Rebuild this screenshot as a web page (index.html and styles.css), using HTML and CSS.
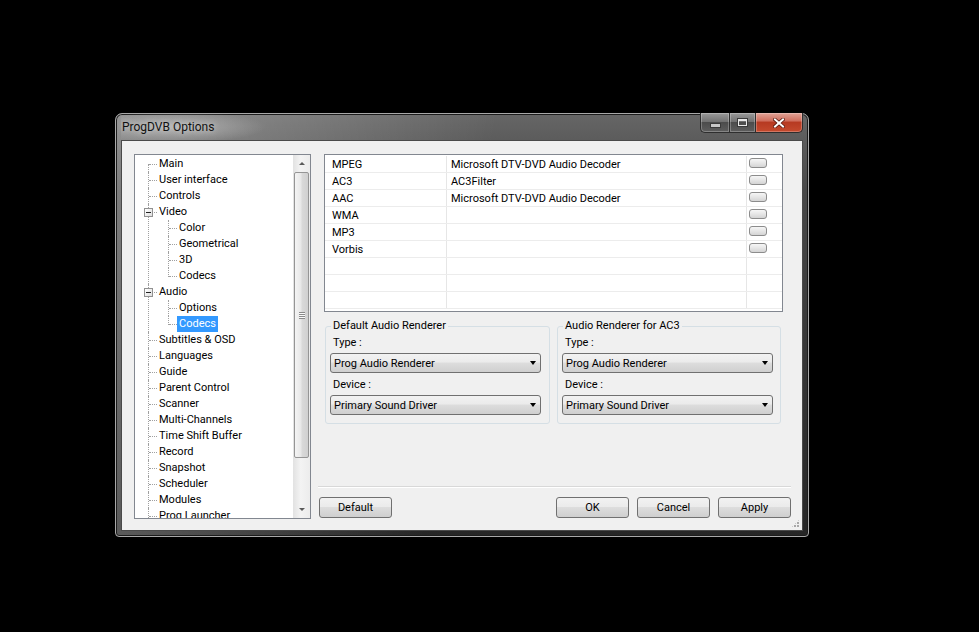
FILE: index.html
```html
<!DOCTYPE html>
<html lang="en">
<head>
    <meta charset="UTF-8">
    <title>ProgDVB Options</title>
    <link rel="stylesheet" href="styles.css">
</head>
<body>
    <div class="window">
        <!-- Title bar -->
        <div class="titlebar">
            <span class="title">ProgDVB Options</span>
            <div class="caption">
                <span class="cap cap-min"><i></i></span>
                <span class="cap cap-max"><i></i></span>
                <span class="cap cap-close">
                    <svg width="12" height="10" viewBox="0 0 12 10">
                        <path d="M2 1.5 L10 8.5 M10 1.5 L2 8.5" stroke="#5a1a10" stroke-width="3.6" stroke-linecap="square"/>
                        <path d="M2 1.5 L10 8.5 M10 1.5 L2 8.5" stroke="#ffffff" stroke-width="2" stroke-linecap="square"/>
                    </svg>
                </span>
            </div>
        </div>

        <div class="client">
            <!-- Left: options tree -->
            <div class="treebox">
                <div class="tree-wrap">
                    <ul class="tree">
                        <li><span class="lbl">Main</span></li>
                        <li><span class="lbl">User interface</span></li>
                        <li><span class="lbl">Controls</span></li>
                        <li><i class="exp"></i><span class="lbl">Video</span>
                            <ul>
                                <li><span class="lbl">Color</span></li>
                                <li><span class="lbl">Geometrical</span></li>
                                <li><span class="lbl">3D</span></li>
                                <li><span class="lbl">Codecs</span></li>
                            </ul>
                        </li>
                        <li><i class="exp"></i><span class="lbl">Audio</span>
                            <ul>
                                <li><span class="lbl">Options</span></li>
                                <li><span class="lbl sel">Codecs</span></li>
                            </ul>
                        </li>
                        <li><span class="lbl">Subtitles &amp; OSD</span></li>
                        <li><span class="lbl">Languages</span></li>
                        <li><span class="lbl">Guide</span></li>
                        <li><span class="lbl">Parent Control</span></li>
                        <li><span class="lbl">Scanner</span></li>
                        <li><span class="lbl">Multi-Channels</span></li>
                        <li><span class="lbl">Time Shift Buffer</span></li>
                        <li><span class="lbl">Record</span></li>
                        <li><span class="lbl">Snapshot</span></li>
                        <li><span class="lbl">Scheduler</span></li>
                        <li><span class="lbl">Modules</span></li>
                        <li><span class="lbl">Prog Launcher</span></li>
                    </ul>
                </div>
                <div class="vscroll">
                    <span class="arr arr-up"></span>
                    <div class="track"><div class="thumb"><i></i></div></div>
                    <span class="arr arr-down"></span>
                </div>
            </div>

            <!-- Right: audio codecs page -->
            <div class="side">
                <div class="grid">
                    <div class="row"><span class="c1">MPEG</span><span class="c2">Microsoft DTV-DVD Audio Decoder</span><span class="c3"><i class="mini"></i></span></div>
                    <div class="row"><span class="c1">AC3</span><span class="c2">AC3Filter</span><span class="c3"><i class="mini"></i></span></div>
                    <div class="row"><span class="c1">AAC</span><span class="c2">Microsoft DTV-DVD Audio Decoder</span><span class="c3"><i class="mini"></i></span></div>
                    <div class="row"><span class="c1">WMA</span><span class="c2"></span><span class="c3"><i class="mini"></i></span></div>
                    <div class="row"><span class="c1">MP3</span><span class="c2"></span><span class="c3"><i class="mini"></i></span></div>
                    <div class="row"><span class="c1">Vorbis</span><span class="c2"></span><span class="c3"><i class="mini"></i></span></div>
                    <div class="row"><span class="c1"></span><span class="c2"></span><span class="c3"></span></div>
                    <div class="row"><span class="c1"></span><span class="c2"></span><span class="c3"></span></div>
                    <div class="row"><span class="c1"></span><span class="c2"></span><span class="c3"></span></div>
                </div>

                <div class="groups">
                    <fieldset class="group">
                        <legend>Default Audio Renderer</legend>
                        <div class="lab">Type :</div>
                        <div class="combo"><span>Prog Audio Renderer</span><i class="drop"></i></div>
                        <div class="lab lab-2">Device :</div>
                        <div class="combo"><span>Primary Sound Driver</span><i class="drop"></i></div>
                    </fieldset>
                    <fieldset class="group group-ac3">
                        <legend>Audio Renderer for AC3</legend>
                        <div class="lab">Type :</div>
                        <div class="combo"><span>Prog Audio Renderer</span><i class="drop"></i></div>
                        <div class="lab lab-2">Device :</div>
                        <div class="combo"><span>Primary Sound Driver</span><i class="drop"></i></div>
                    </fieldset>
                </div>

                <div class="sep"></div>

                <div class="buttons">
                    <button class="btn">Default</button>
                    <button class="btn btn-ok">OK</button>
                    <button class="btn">Cancel</button>
                    <button class="btn">Apply</button>
                </div>
            </div>

            <span class="grip"></span>
        </div>
    </div>
</body>
</html>
```

FILE: styles.css
```css
body {
    margin: 0;
    height: 632px;
    overflow: hidden;
    background: #000;
    font-family: Roboto, "Liberation Sans", Arial, sans-serif;
    font-size: 11px;
    color: #000;
}

/* Window frame */
.window {
    width: 694px;
    height: 424px;
    box-sizing: border-box;
    margin: 113px 0 0 115px;
    padding: 0 5px 5px;
    border: 1px solid #a8a8a8;
    border-radius: 7px 7px 4px 4px;
    display: flex;
    flex-direction: column;
    background:
        linear-gradient(100deg, rgba(255, 255, 255, 0.3) 0%, rgba(255, 255, 255, 0.12) 30%, rgba(255, 255, 255, 0) 50%),
        linear-gradient(180deg, #666 0%, #484848 18%, #353535 60%, #262626 100%);
    box-shadow: inset 0 0 0 1px #1c1c1c;
}

.titlebar {
    height: 26px;
    flex: none;
    display: flex;
    align-items: flex-start;
    background: radial-gradient(ellipse 90px 16px at 55px 13px, rgba(205, 205, 205, 0.6), rgba(205, 205, 205, 0));
}

.title {
    margin: 5px 0 0 1px;
    font-size: 12px;
    line-height: 16px;
    color: #111;
    text-shadow: 0 0 6px rgba(235, 235, 235, 0.8);
}

/* Caption buttons */
.caption {
    margin: -1px 0 0 auto;
    display: flex;
    height: 20px;
}

.cap {
    height: 20px;
    box-sizing: border-box;
    border: 1px solid #2e2e2e;
    border-top: none;
    display: flex;
    align-items: center;
    justify-content: center;
    box-shadow: inset 0 0 0 1px rgba(255, 255, 255, 0.25);
}

.cap-min,
.cap-max {
    background: linear-gradient(180deg, #9a9a9a 0%, #727272 45%, #4c4c4c 50%, #5e5e5e 100%);
}

.cap-min {
    width: 29px;
    border-bottom-left-radius: 5px;
    border-right: none;
}

.cap-min i {
    width: 9px;
    height: 3px;
    margin-top: 6px;
    background: #c8c8c8;
    border: 1px solid #3a3a3a;
}

.cap-max {
    width: 26px;
    border-right: none;
}

.cap-max i {
    width: 7px;
    height: 4px;
    border: 1px solid #e8e8e8;
    border-top-width: 2px;
    outline: 1px solid #3a3a3a;
}

.cap-close {
    width: 48px;
    border-bottom-right-radius: 5px;
    background: linear-gradient(180deg, #e2a497 0%, #d0705f 40%, #b73a22 50%, #c44a2e 100%);
}

/* Client area */
.client {
    position: relative;
    flex: 1;
    display: flex;
    gap: 7px;
    padding: 13px 0 0 12px;
    border: 1px solid #4a4a4a;
    background: #f0f0f0;
}

/* Tree view */
.treebox {
    width: 177px;
    height: 365px;
    box-sizing: border-box;
    border: 1px solid #828790;
    background: #fff;
    display: flex;
}

.tree-wrap {
    flex: 1;
    overflow: hidden;
    padding-top: 1px;
}

.tree,
.tree ul {
    list-style: none;
    margin: 0;
    padding: 0;
}

.tree {
    margin-left: 13px;
}

.tree ul {
    margin-left: 11px;
}

.tree li {
    position: relative;
    padding-left: 9px;
    line-height: 16px;
}

.tree li::before {
    content: '';
    position: absolute;
    left: 1px;
    top: 8px;
    width: 8px;
    border-top: 1px dotted #a0a0a0;
}

.tree li::after {
    content: '';
    position: absolute;
    left: 0;
    top: 0;
    bottom: 0;
    border-left: 1px dotted #a0a0a0;
}

.tree > li:first-child::after {
    top: 8px;
}

.tree ul > li:last-child::after {
    bottom: auto;
    height: 9px;
}

.lbl {
    display: inline-block;
    height: 16px;
    padding: 0 2px;
    vertical-align: top;
    white-space: nowrap;
}

.lbl.sel {
    background: #3399ff;
    color: #fff;
}

.exp {
    position: absolute;
    z-index: 1;
    left: -4px;
    top: 4px;
    width: 9px;
    height: 9px;
    box-sizing: border-box;
    border: 1px solid #919191;
    background: linear-gradient(135deg, #fff, #dedede);
}

.exp::after {
    content: '';
    position: absolute;
    left: 1px;
    top: 3px;
    width: 5px;
    height: 1px;
    background: #222;
}

/* Scrollbar */
.vscroll {
    width: 17px;
    flex: none;
    display: flex;
    flex-direction: column;
    background: linear-gradient(90deg, #e2e2e2, #f3f3f3 45%, #ececec);
}

.arr {
    height: 17px;
    flex: none;
    display: flex;
    align-items: center;
    justify-content: center;
}

.arr::before {
    content: '';
    border-left: 3px solid transparent;
    border-right: 3px solid transparent;
}

.arr-up::before {
    border-bottom: 3px solid #5a5a5a;
}

.arr-down::before {
    border-top: 3px solid #5a5a5a;
}

.track {
    flex: 1;
    padding: 0 1px;
}

.thumb {
    height: 286px;
    box-sizing: border-box;
    border: 1px solid #959595;
    border-radius: 2px;
    background: linear-gradient(90deg, #f4f4f4, #e8e8e8 45%, #d9d9d9 55%, #d0d0d0);
    display: flex;
    align-items: center;
    justify-content: center;
}

.thumb i {
    width: 6px;
    height: 7px;
    background: repeating-linear-gradient(180deg, #8a8a8a 0, #8a8a8a 1px, #fafafa 1px, #fafafa 2px);
}

/* Codec grid */
.side {
    width: 473px;
    height: 365px;
    display: flex;
    flex-direction: column;
}

.grid {
    width: 459px;
    height: 158px;
    box-sizing: border-box;
    margin-left: 6px;
    padding-top: 1px;
    border: 1px solid #828790;
    background: #fff;
}

.row {
    display: flex;
    height: 17px;
    box-sizing: border-box;
    border-bottom: 1px solid #ececec;
    line-height: 16px;
    white-space: nowrap;
}

.c1 {
    width: 122px;
    box-sizing: border-box;
    padding: 1px 0 0 7px;
    border-right: 1px solid #e6e6e6;
}

.c2 {
    width: 300px;
    box-sizing: border-box;
    padding: 1px 0 0 4px;
    border-right: 1px solid #e6e6e6;
}

.c3 {
    flex: 1;
}

.mini {
    display: block;
    width: 18px;
    height: 10px;
    margin: 2px 0 0 2px;
    box-sizing: border-box;
    border: 1px solid #8c8c8c;
    border-radius: 3px;
    background: linear-gradient(180deg, #f6f6f6, #e6e6e6 50%, #d4d4d4);
}

/* Group boxes */
.groups {
    display: flex;
    gap: 7px;
    margin: 7px 0 0 7px;
}

.group {
    width: 225px;
    min-width: 0;
    box-sizing: border-box;
    margin: 0;
    padding: 0 8px 8px 4px;
    border: 1px solid #d5dfe5;
    border-radius: 3px;
}

.group-ac3 {
    width: 224px;
}

.group legend {
    padding: 0 2px;
    margin-left: 1px;
    line-height: 14px;
}

.lab {
    margin-top: 3px;
    padding-left: 3px;
    line-height: 14px;
}

.lab-2 {
    margin-top: 5px;
}

.combo {
    width: 211px;
    height: 20px;
    box-sizing: border-box;
    margin-top: 3px;
    padding-left: 3px;
    border: 1px solid #707070;
    border-radius: 3px;
    background: linear-gradient(180deg, #f2f2f2 0%, #ebebeb 45%, #dddddd 50%, #cfcfcf 100%);
    display: flex;
    align-items: center;
    white-space: nowrap;
}

.drop {
    margin: 0 4px 0 auto;
    border-left: 3.5px solid transparent;
    border-right: 3.5px solid transparent;
    border-top: 4px solid #000;
}

/* Bottom buttons */
.sep {
    margin-top: auto;
    border-top: 1px solid #d8d8d8;
    border-bottom: 1px solid #fff;
}

.buttons {
    display: flex;
    gap: 8px;
    margin: 9px 0 1px 1px;
}

.btn {
    width: 73px;
    height: 21px;
    padding: 0;
    border: 1px solid #707070;
    border-radius: 3px;
    background: linear-gradient(180deg, #f2f2f2 0%, #ebebeb 45%, #dddddd 50%, #cfcfcf 100%);
    font-family: inherit;
    font-size: 11px;
    color: #000;
}

.btn-ok {
    margin-left: auto;
}

/* Size grip */
.grip {
    position: absolute;
    right: 2px;
    bottom: 2px;
    width: 9px;
    height: 9px;
    background: radial-gradient(circle at 1px 1px, #a8a8a8 1px, transparent 1.2px) 0 0 / 3px 3px;
    clip-path: polygon(100% 0, 100% 100%, 0 100%);
}
```
